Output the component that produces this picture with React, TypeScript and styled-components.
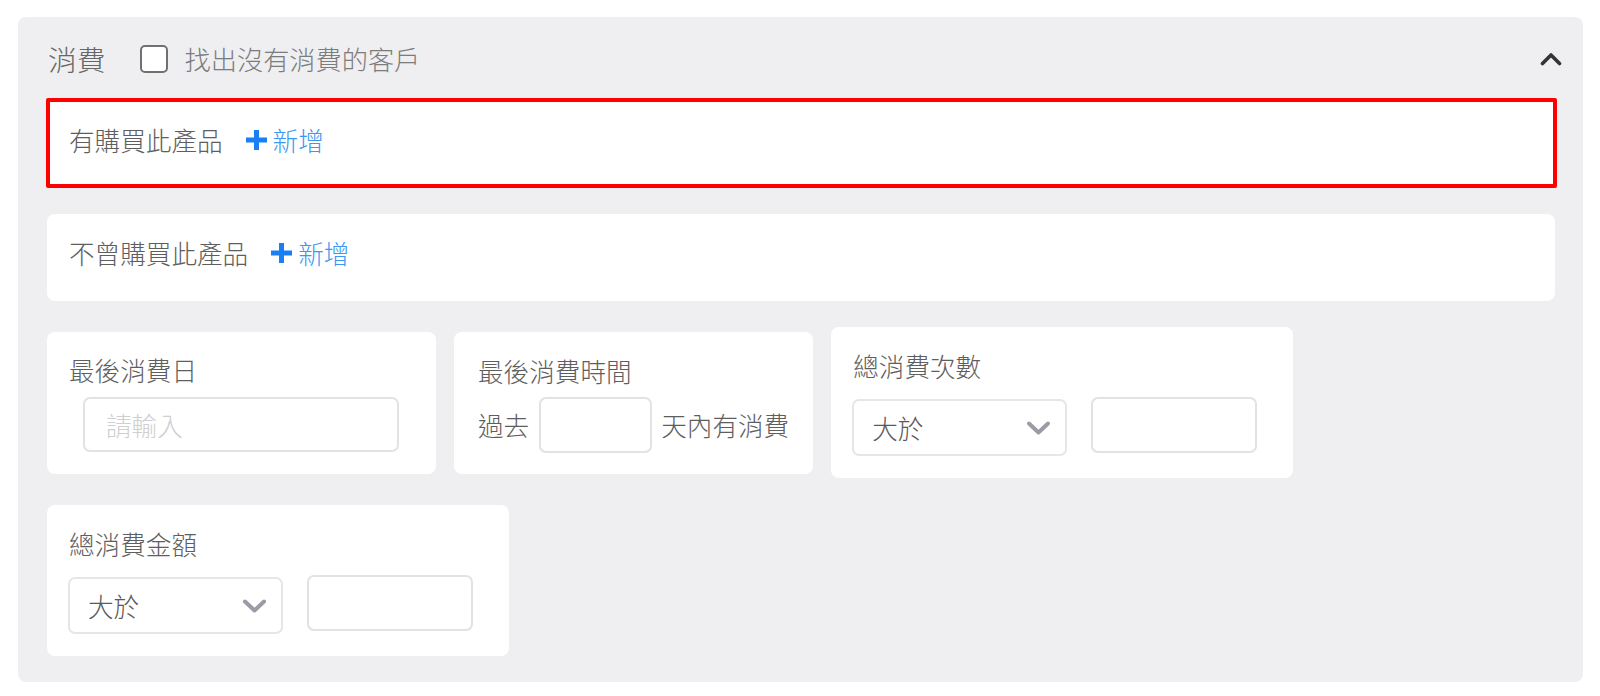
import React from "react";
import styled, { createGlobalStyle } from "styled-components";

const GlobalStyle = createGlobalStyle`
  html, body {
    margin: 0;
    padding: 0;
    background: #ffffff;
  }
  body {
    font-family: "Noto Sans CJK TC", "Noto Sans", "Liberation Sans", sans-serif;
    font-weight: 300;
    color: #606060;
  }
  * { box-sizing: border-box; }
`;

const Page = styled.div`
  padding: 17px 17px 14px 18px;
`;

const Panel = styled.section`
  background: #efeff1;
  border-radius: 8px;
  padding: 0 28px 26px 29px;
`;

const Header = styled.div`
  display: flex;
  align-items: center;
  min-height: 81px;
  padding: 2px 0 0 1px;
`;

const PanelTitle = styled.h2`
  margin: 0;
  font-size: 28.8px;
  font-weight: 300;
  line-height: 36px;
  color: #666666;
`;

const CheckLabel = styled.label`
  display: flex;
  align-items: center;
  margin-left: 34px;
  gap: 17px;
  font-size: 26.2px;
  line-height: 36px;
  color: #7c7c7c;
  cursor: pointer;
`;

const CheckBox = styled.span`
  width: 28px;
  height: 28px;
  border: 2px solid #707070;
  border-radius: 5px;
  background: #ffffff;
`;

const CollapseButton = styled.button`
  margin-left: auto;
  margin-right: -7px;
  padding: 0;
  border: none;
  background: transparent;
  display: flex;
  align-items: center;
  cursor: pointer;
`;

const Body = styled.div`
  display: flex;
  flex-direction: column;
  gap: 26px;
`;

const ProductCard = styled.div<{ $highlighted?: boolean }>`
  background: #ffffff;
  border-radius: ${(p) => (p.$highlighted ? "2px" : "8px")};
  border: ${(p) => (p.$highlighted ? "4px solid #ff0000" : "none")};
  margin: ${(p) => (p.$highlighted ? "0 -2px 0 -1px" : "0")};
  padding: ${(p) => (p.$highlighted ? "20px 19px 26px" : "21px 22px 30px")};
  display: flex;
  align-items: center;
  font-size: 25.6px;
  line-height: 36px;
  color: #5e5e5e;
`;

const AddButton = styled.button`
  display: flex;
  align-items: center;
  gap: 5px;
  margin-left: 22px;
  padding: 0;
  border: none;
  background: transparent;
  font-family: inherit;
  font-weight: 300;
  font-size: 25.6px;
  line-height: 36px;
  color: #3a98f2;
  cursor: pointer;
`;

const FilterGrid = styled.div`
  display: flex;
  flex-wrap: wrap;
  align-items: center;
  column-gap: 18px;
  row-gap: 27px;
`;

const FilterCard = styled.div<{ $pad: string }>`
  background: #ffffff;
  border-radius: 8px;
  padding: ${(p) => p.$pad};
  display: flex;
  flex-direction: column;
`;

const FilterTitle = styled.div<{ $indent?: number }>`
  margin-left: ${(p) => p.$indent ?? 0}px;
  font-size: 25.6px;
  line-height: 36px;
  color: #5e5e5e;
`;

const ControlRow = styled.div<{ $top: number }>`
  display: flex;
  align-items: center;
  margin-top: ${(p) => p.$top}px;
  font-size: 25.6px;
  line-height: 36px;
  color: #5e5e5e;
`;

const TextBox = styled.input<{ $w: number; $h: number; $indent?: number; $lift?: number }>`
  width: ${(p) => p.$w}px;
  height: ${(p) => p.$h}px;
  margin-left: ${(p) => p.$indent ?? 0}px;
  margin-top: ${(p) => -(p.$lift ?? 0)}px;
  margin-bottom: ${(p) => p.$lift ?? 0}px;
  border: 2px solid #e2e2e2;
  border-radius: 7px;
  background: #ffffff;
  padding: 0 21px;
  font-family: inherit;
  font-weight: 300;
  font-size: 25.6px;
  color: #555555;
  outline: none;
  &::placeholder {
    color: #cfcfcf;
  }
`;

const SelectBox = styled.div<{ $w: number; $h: number }>`
  width: ${(p) => p.$w}px;
  height: ${(p) => p.$h}px;
  border: 2px solid #e6e6e6;
  border-radius: 7px;
  background: #ffffff;
  display: flex;
  align-items: center;
  justify-content: space-between;
  padding: 0 14px 0 18px;
  font-size: 25.6px;
  color: #5a5a5a;
`;

const Spacer = styled.span<{ $w: number }>`
  display: inline-block;
  width: ${(p) => p.$w}px;
`;

const ChevronUp = () => (
  <svg width="22" height="14" viewBox="0 0 22 14" fill="none">
    <polyline
      points="2.5,11.5 11,3 19.5,11.5"
      stroke="#333338"
      strokeWidth="3.6"
      strokeLinecap="round"
      strokeLinejoin="round"
    />
  </svg>
);

const ChevronDown = () => (
  <svg width="25" height="16" viewBox="0 0 25 16" fill="none">
    <polyline
      points="3,3.5 12.5,12.5 22,3.5"
      stroke="#9b9ba6"
      strokeWidth="4"
      strokeLinecap="round"
      strokeLinejoin="round"
    />
  </svg>
);

const PlusIcon = () => (
  <svg width="23" height="22" viewBox="0 0 23 22" fill="none">
    <path d="M11.5 1V21M1 11H22" stroke="#1a7ff2" strokeWidth="5" />
  </svg>
);

const CompareCard = ({ title }: { title: string }) => (
  <FilterCard $pad="21px 36px 22px 21px">
    <FilterTitle $indent={1}>{title}</FilterTitle>
    <ControlRow $top={15}>
      <SelectBox $w={215} $h={57}>
        大於
        <ChevronDown />
      </SelectBox>
      <Spacer $w={24} />
      <TextBox $w={166} $h={56} $lift={3} />
    </ControlRow>
  </FilterCard>
);

export default function App() {
  return (
    <>
      <GlobalStyle />
      <Page>
        <Panel>
          <Header>
            <PanelTitle>消費</PanelTitle>
            <CheckLabel>
              <CheckBox />
              找出沒有消費的客戶
            </CheckLabel>
            <CollapseButton aria-label="收合">
              <ChevronUp />
            </CollapseButton>
          </Header>
          <Body>
            <ProductCard $highlighted>
              有購買此產品
              <AddButton>
                <PlusIcon />
                新增
              </AddButton>
            </ProductCard>
            <ProductCard>
              不曾購買此產品
              <AddButton>
                <PlusIcon />
                新增
              </AddButton>
            </ProductCard>
            <FilterGrid>
              <FilterCard $pad="20px 37px 22px 22px">
                <FilterTitle>最後消費日</FilterTitle>
                <ControlRow $top={9}>
                  <TextBox $w={316} $h={55} $indent={14} placeholder="請輸入" />
                </ControlRow>
              </FilterCard>
              <FilterCard $pad="21px 24px 21px 24px">
                <FilterTitle>最後消費時間</FilterTitle>
                <ControlRow $top={8}>
                  過去
                  <Spacer $w={10} />
                  <TextBox $w={113} $h={56} />
                  <Spacer $w={9} />
                  天內有消費
                </ControlRow>
              </FilterCard>
              <CompareCard title="總消費次數" />
              <CompareCard title="總消費金額" />
            </FilterGrid>
          </Body>
        </Panel>
      </Page>
    </>
  );
}
